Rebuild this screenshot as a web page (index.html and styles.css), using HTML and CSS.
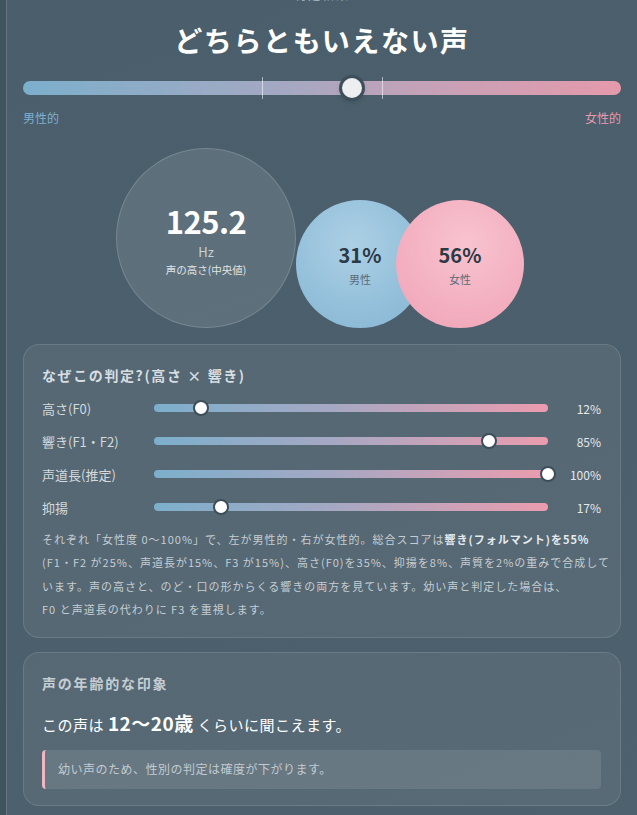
FILE: index.html
```html
<!DOCTYPE html>
<html lang="ja">
<head>
<meta charset="utf-8">
<link rel="stylesheet" href="styles.css">
</head>
<body>
<div class="page">
  <div class="kicker">判定結果</div>
  <h1 class="verdict">どちらともいえない声</h1>

  <div class="scale">
    <div class="scale-track">
      <span class="tick" style="left:40%"></span>
      <span class="tick" style="left:60%"></span>
      <span class="scale-thumb" style="left:55%"></span>
    </div>
    <div class="scale-labels">
      <span class="lbl-m">男性的</span>
      <span class="lbl-f">女性的</span>
    </div>
  </div>

  <div class="bubbles">
    <div class="bubble pitch">
      <div class="pitch-num">125.2</div>
      <div class="pitch-unit">Hz</div>
      <div class="pitch-cap">声の高さ(中央値)</div>
    </div>
    <div class="bubble male">
      <div class="pct">31%</div>
      <div class="pct-cap">男性</div>
    </div>
    <div class="bubble female">
      <div class="pct">56%</div>
      <div class="pct-cap">女性</div>
    </div>
  </div>

  <section class="card">
    <h2 class="card-title">なぜこの判定?(高さ × 響き)</h2>
    <div class="rows">
      <div class="row">
        <span class="row-label">高さ(F0)</span>
        <div class="bar"><span class="knob" style="left:12%"></span></div>
        <span class="row-val">12%</span>
      </div>
      <div class="row">
        <span class="row-label">響き(F1・F2)</span>
        <div class="bar"><span class="knob" style="left:85%"></span></div>
        <span class="row-val">85%</span>
      </div>
      <div class="row">
        <span class="row-label">声道長(推定)</span>
        <div class="bar"><span class="knob" style="left:100%"></span></div>
        <span class="row-val">100%</span>
      </div>
      <div class="row">
        <span class="row-label">抑揚</span>
        <div class="bar"><span class="knob" style="left:17%"></span></div>
        <span class="row-val">17%</span>
      </div>
    </div>
    <p class="explain">それぞれ「女性度 0〜100%」で、左が男性的・右が女性的。総合スコアは<b>響き(フォルマント)を55%</b><br>(F1・F2 が25%、声道長が15%、F3 が15%)、高さ(F0)を35%、抑揚を8%、声質を2%の重みで合成して<br>います。声の高さと、のど・口の形からくる響きの両方を見ています。幼い声と判定した場合は、<br>F0 と声道長の代わりに F3 を重視します。</p>
  </section>

  <section class="card age">
    <h2 class="card-title">声の年齢的な印象</h2>
    <p class="age-line">この声は <strong>12〜20歳</strong> くらいに聞こえます。</p>
    <div class="note">幼い声のため、性別の判定は確度が下がります。</div>
  </section>
</div>
</body>
</html>
```

FILE: styles.css
```css
* { box-sizing: border-box; }
html, body { margin: 0; padding: 0; }
body {
  background: #40545f;
  font-family: "Noto Sans CJK JP", "Noto Sans", sans-serif;
  color: #e8ecee;
  overflow: hidden;
  height: 815px;
}
.page {
  margin-left: 6px;
  border-left: 1px solid rgba(255,255,255,0.14);
  background: linear-gradient(160deg, #4a5e6b 0%, #4b5f6c 60%, #4d616e 100%);
  min-height: 840px;
  padding: 0 16px 0 16px;
}
.kicker {
  text-align: center;
  font-size: 12px;
  line-height: 14px;
  margin-top: -12px;
  color: rgba(255,255,255,0.5);
  letter-spacing: 2px;
}
.verdict {
  margin: 20px 0 0;
  text-align: center;
  font-size: 28px;
  line-height: 36px;
  font-weight: 700;
  letter-spacing: 1.6px;
  color: #ffffff;
}
.scale { margin-top: 23px; }
.scale-track {
  position: relative;
  height: 14px;
  border-radius: 7px;
  background: linear-gradient(90deg, #7cafcc 0%, #a6a8c2 45%, #c3a2b8 65%, #e59aab 100%);
}
.tick {
  position: absolute;
  top: -4px;
  width: 1px;
  height: 22px;
  background: rgba(255,255,255,0.55);
}
.scale-thumb {
  position: absolute;
  top: -3px;
  width: 20px;
  height: 20px;
  margin-left: -10px;
  border-radius: 50%;
  background: #eceef0;
  box-shadow: 0 0 0 3px #3d4f5a, 0 2px 6px rgba(0,0,0,0.35);
}
.scale-labels {
  display: flex;
  justify-content: space-between;
  margin-top: 14px;
  font-size: 12px;
  line-height: 18px;
}
.lbl-m { color: #7fb0cf; }
.lbl-f { color: #e79aae; }

.bubbles {
  display: flex;
  justify-content: center;
  align-items: flex-end;
  margin-top: 21px;
  padding-right: 4px;
}
.bubble {
  border-radius: 50%;
  display: flex;
  flex-direction: column;
  align-items: center;
  justify-content: center;
  flex: none;
}
.pitch {
  width: 180px;
  height: 180px;
  background: rgba(255,255,255,0.11);
  border: 1px solid rgba(255,255,255,0.16);
}
.pitch-num {
  font-size: 31px;
  font-weight: 700;
  line-height: 45px;
  color: #ffffff;
  letter-spacing: -0.5px;
}
.pitch-unit {
  font-size: 13px;
  line-height: 18px;
  color: #c8d0d5;
}
.pitch-cap {
  font-size: 10.5px;
  line-height: 16px;
  color: #dfe4e7;
  margin-top: 1px;
}
.male, .female {
  width: 128px;
  height: 128px;
}
.male {
  background: radial-gradient(circle at 45% 35%, #acd0e5 0%, #93bfda 60%, #86b4d2 100%);
}
.female {
  margin-left: -28px;
  background: radial-gradient(circle at 55% 35%, #f8c3cf 0%, #f3afc0 60%, #eea3b6 100%);
}
.pct {
  font-size: 20px;
  font-weight: 700;
  line-height: 26px;
  color: #2b3a44;
}
.pct-cap {
  font-size: 11px;
  line-height: 16px;
  color: #5d6b75;
  margin-top: 3px;
}

.card {
  margin-top: 16px;
  border-radius: 16px;
  background: rgba(255,255,255,0.06);
  border: 1px solid rgba(255,255,255,0.12);
  padding: 18px 19px 16px 18px;
}
.card-title {
  margin: 0;
  font-size: 14px;
  line-height: 24px;
  font-weight: 700;
  color: #d7dde1;
  letter-spacing: 1.6px;
}
.rows {
  margin-top: 11px;
  display: flex;
  flex-direction: column;
  gap: 13px;
}
.row {
  display: flex;
  align-items: center;
  height: 20px;
}
.row-label {
  width: 112px;
  flex: none;
  font-size: 13px;
  color: #d3d9dd;
}
.bar {
  position: relative;
  flex: 1;
  height: 8px;
  border-radius: 4px;
  background: linear-gradient(90deg, #7cafcc 0%, #a5a8c3 45%, #cca2b8 75%, #eb9cae 100%);
}
.knob {
  position: absolute;
  top: -4px;
  width: 16px;
  height: 16px;
  margin-left: -8px;
  border-radius: 50%;
  background: #ffffff;
  border: 2px solid #3c4e59;
}
.row-val {
  width: 53px;
  flex: none;
  text-align: right;
  font-size: 12px;
  color: #e4e8eb;
}
.explain {
  margin: 11px 0 0;
  font-size: 11px;
  line-height: 23.3px;
  color: #c6cdd2;
  letter-spacing: 1px;
  white-space: nowrap;
}
.explain b { color: #e6eaed; font-weight: 700; }

.age { margin-top: 14px; padding-bottom: 16px; }
.age .card-title { color: #c6cdd2; letter-spacing: 1.8px; }
.age-line {
  margin: 14px 0 0;
  font-size: 15px;
  line-height: 28px;
  color: #ffffff;
  letter-spacing: 0.5px;
}
.age-line strong { font-size: 19px; font-weight: 700; }
.note {
  margin-top: 11px;
  background: rgba(255,255,255,0.1);
  border-left: 3px solid #efb6c4;
  border-radius: 4px;
  padding: 9px 13px 10px;
  font-size: 12px;
  line-height: 20px;
  color: #c3cacf;
  letter-spacing: 0.5px;
}
```
